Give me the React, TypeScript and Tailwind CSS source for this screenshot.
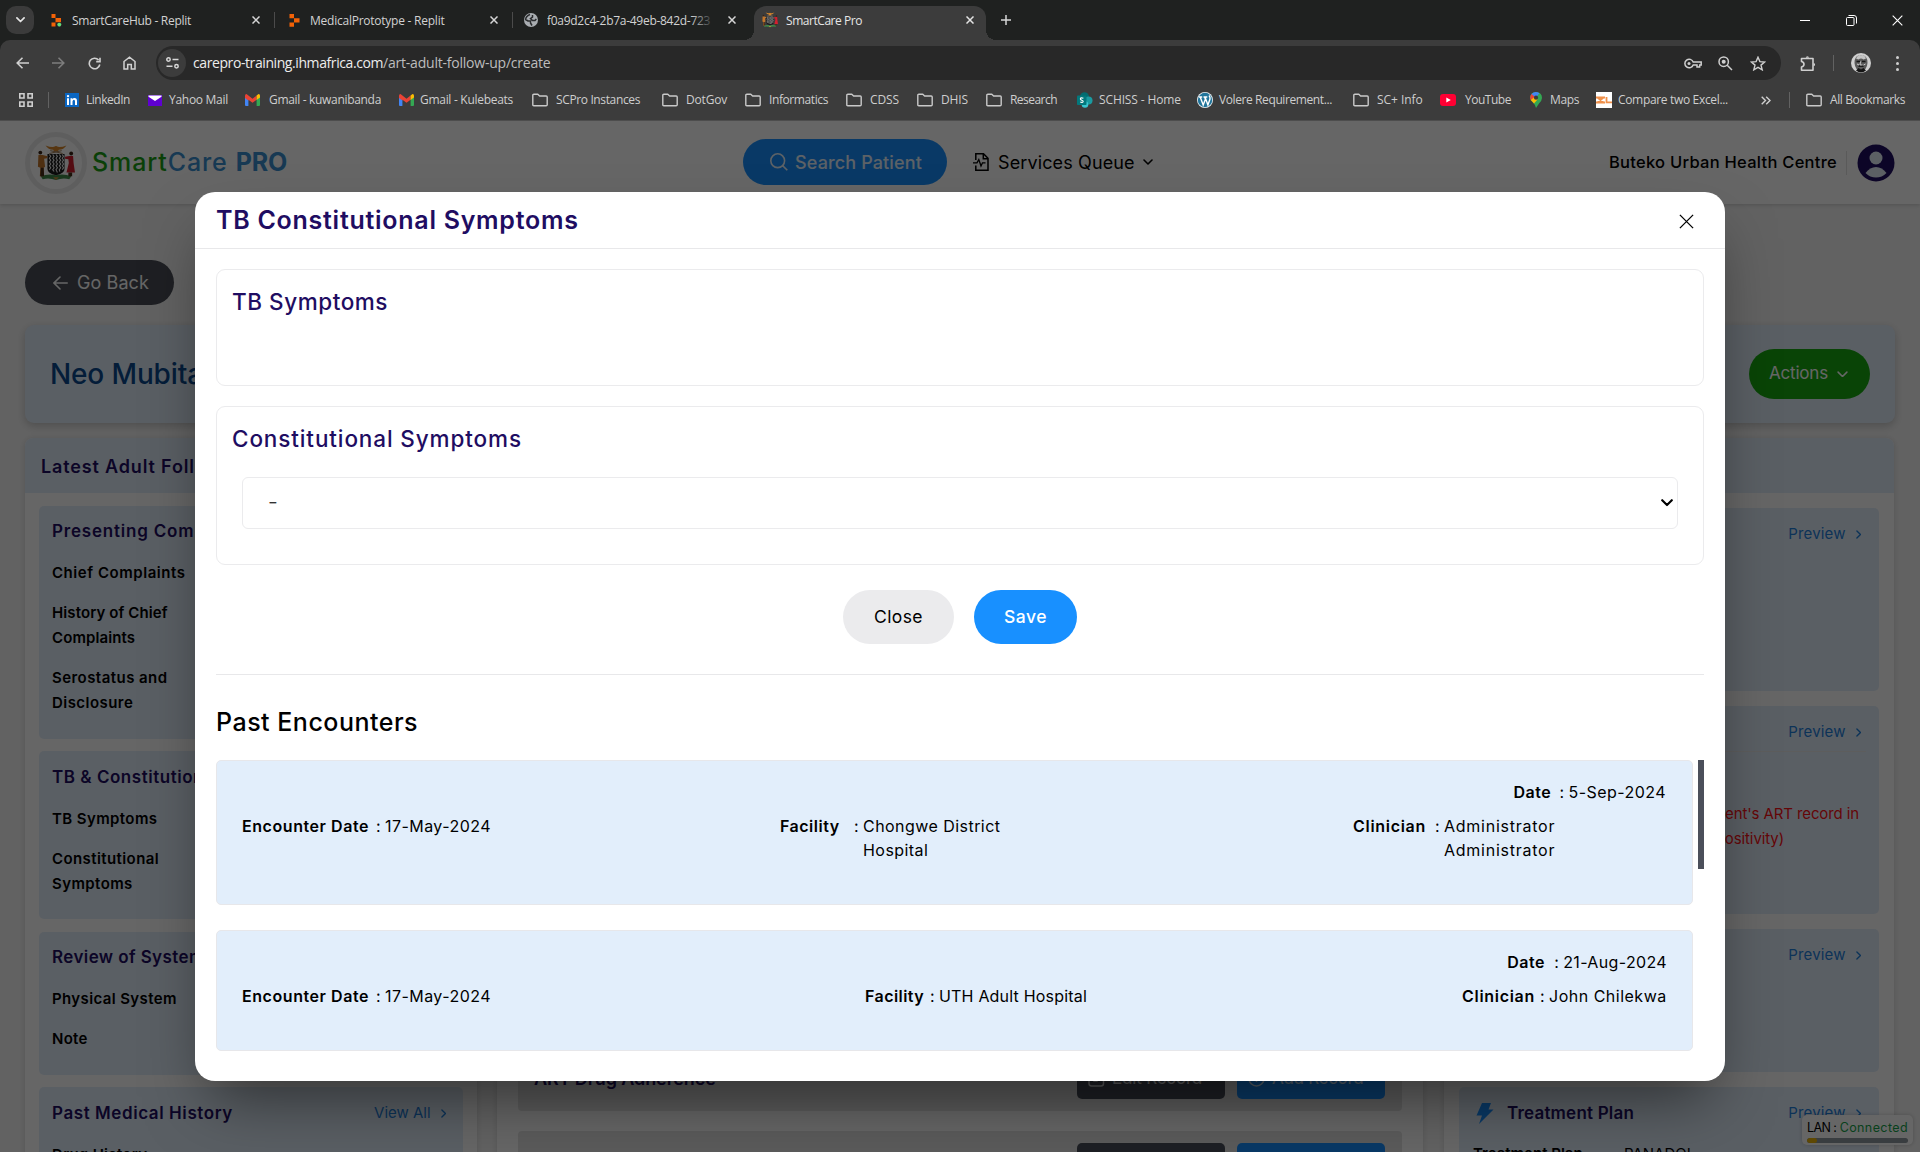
import type { ReactNode } from "react";

/* ---------- small drawings ---------- */

function Close({ s = 8, c = "#d6d6d6", w = 1.5 }: { s?: number; c?: string; w?: number }) {
  return (
    <svg width={s} height={s} viewBox="0 0 10 10" fill="none" stroke={c} strokeWidth={w * (10 / s)} className="shrink-0">
      <path d="M.6.6l8.800 8.800M9.400.6.6 9.400" />
    </svg>
  );
}

function Chevron({ w = 10, c = "currentColor", sw = 1.5, dir = "down" }: { w?: number; c?: string; sw?: number; dir?: "down" | "right" }) {
  return dir === "down" ? (
    <svg width={w} height={w * 0.6} viewBox="0 0 10 6" fill="none" stroke={c} strokeWidth={sw} strokeLinecap="round" strokeLinejoin="round" className="shrink-0">
      <path d="M1 1l4 4 4-4" />
    </svg>
  ) : (
    <svg width={w * 0.6} height={w} viewBox="0 0 6 10" fill="none" stroke={c} strokeWidth={sw} strokeLinecap="round" strokeLinejoin="round" className="shrink-0">
      <path d="M1 1l4 4-4 4" />
    </svg>
  );
}

function Folder() {
  return (
    <svg width="16" height="14" viewBox="0 0 16 14" fill="none" stroke="#c9c9c9" strokeWidth="1.4" strokeLinejoin="round" className="shrink-0">
      <path d="M.8 2.2Q.8 1.2 1.8 1.2H5.8L7.6 3H14.2Q15.2 3 15.2 4V11.8Q15.2 12.8 14.2 12.8H1.8Q.8 12.8.8 11.8Z" />
    </svg>
  );
}

function CoatOfArms({ size = 16 }: { size?: number }) {
  return (
    <svg width={size} height={size} viewBox="0 0 40 40" className="shrink-0">
      <path d="M4 34Q12 31 20 33Q28 31 36 34L34 37Q27 35 20 38Q13 35 6 37Z" fill="#3f8a4a" />
      <path d="M17 35h6l-3 3z" fill="#c98a3a" />
      <path d="M9 1.500Q14 3.500 18 3Q20 1 22 3Q26 3.500 31 1.500Q28 6 23 6L22 8H18L17 6Q12 6 9 1.500Z" fill="#d9882b" />
      <path d="M13 10l13-3M27 10L14 7" stroke="#a07a50" strokeWidth="1" />
      <path d="M11 10.500H29V26Q29 31 20 33Q11 31 11 26Z" fill="#1c1c1c" />
      <path
        d="M13 11l1.500 2-1.500 2 1.500 2-1.500 2 1.500 2-1.500 2 1.500 2-1.500 2M16.500 11l1.500 2-1.500 2 1.500 2-1.500 2 1.500 2-1.500 2 1.500 2-1.500 2 1.500 2M20 11l1.500 2-1.500 2 1.500 2-1.500 2 1.500 2-1.500 2 1.500 2-1.500 2 1.500 3M23.500 11l1.500 2-1.500 2 1.500 2-1.500 2 1.500 2-1.500 2 1.500 2-1.500 2 .5 2M26.500 11l1.500 2-1.500 2 1.500 2-1.500 2 1.500 2-1.500 2 1.500 2-1.500 2"
        stroke="#f4f4f4"
        strokeWidth="1.100"
        fill="none"
      />
      <circle cx="3.500" cy="9" r="2" fill="#3a2415" />
      <path d="M1.500 11.500H6L11 13 10.500 15 7.500 15.500 8.500 24 7 25 7.500 34H3L3.500 25 1 24Z" fill="#c2762c" />
      <path d="M4 25h3l.5 9H3.500Z" fill="#4a2d1a" />
      <circle cx="36" cy="10" r="2" fill="#3a2415" />
      <path d="M34 12.500H38L38.500 20 40 30H31L33.500 20 33 16 29.500 15.500V13.500Z" fill="#d3202f" />
      <path d="M33 30h4v4h-4z" fill="#4a2d1a" />
    </svg>
  );
}

function Gmail() {
  return (
    <svg width="15" height="12" viewBox="0 0 15 12" className="shrink-0">
      <path d="M0 2v9a1 1 0 0 0 1 1h2.400V4.500Z" fill="#4285f4" />
      <path d="M15 2v9a1 1 0 0 1-1 1h-2.400V4.500Z" fill="#34a853" />
      <path d="M0 1.800Q0 0 1.500 0L7.500 4.800 11.600 1.600V5.700L7.500 8.800 3.400 5.700V6.500L0 4Z" fill="#ea4335" />
      <path d="M11.600 1.600L13.500.1Q15 0 15 1.800V3.500L11.600 6Z" fill="#fbbc04" />
    </svg>
  );
}

/* ---------- browser frame ---------- */

function Tab({ icon, title, wide, tight, sep }: { icon: ReactNode; title: string; wide: string; tight: string; sep: boolean }) {
  return (
    <div className={`flex h-10 items-center ${wide}`}>
      <div className="flex w-[14px] justify-center">{icon}</div>
      <div className={`ml-[9px] flex-1 overflow-hidden whitespace-nowrap pt-px text-[12px] text-[#d2d2d2] ${tight}`}>{title}</div>
      <Close s={8} />
      <div className={`ml-[14px] h-4 w-px ${sep ? "bg-[#4b4b4b]" : ""}`} />
    </div>
  );
}

function TabStrip() {
  return (
    <div className="flex h-10 items-center bg-[#1f2120] pl-[6px]">
      <div className="mr-[15px] flex h-7 w-7 items-center justify-center rounded-[10px] bg-[#3b3b3b]">
        <Chevron w={9} c="#e6e6e6" sw={1.9} />
      </div>
      <Tab
        wide="w-[226px]"
        tight="tracking-[-0.28px]"
        sep
        title="SmartCareHub - Replit"
        icon={
          <svg width="11" height="13" viewBox="0 0 11 13">
            <path d="M.5 0H4.500V4H.5zM4.500 4H10V8.200H4.500zM.5 8.500H4.500V12.500H.5z" fill="#f26207" />
            <circle cx="8.300" cy="10.600" r="2.300" fill="#3c3c3c" />
            <circle cx="8.300" cy="10.600" r="1.900" fill="#5fe07a" />
          </svg>
        }
      />
      <div className="w-[12px]" />
      <Tab
        wide="w-[226px]"
        tight="tracking-[-0.24px]"
        sep
        title="MedicalPrototype - Replit"
        icon={
          <svg width="11" height="13" viewBox="0 0 11 13">
            <path d="M.5 0H5V4.200H.5zM5 4.200H10.500V8.500H5zM.5 8.500H5V12.700H.5z" fill="#f26207" />
          </svg>
        }
      />
      <div className="w-[11px]" />
      <div className="relative">
        <Tab
          wide="w-[227px]"
          tight="tracking-[-0.28px]"
          sep={false}
          title="f0a9d2c4-2b7a-49eb-842d-723"
          icon={
            <svg width="14" height="14" viewBox="0 0 14 14">
              <circle cx="7" cy="7" r="7" fill="#a9adb1" />
              <path d="M6 1.500Q2 3 1.600 6.500L4 8h2.500v2L8 12.500M8.500 2v2L6.500 5.500 8.500 7.500H11L12.300 6" fill="none" stroke="#2a2c2e" strokeWidth="1.500" />
            </svg>
          }
        />
        <div className="absolute right-[36px] top-2 h-6 w-6 bg-linear-to-r from-transparent to-[#1f2120]" />
      </div>
      <div className="relative ml-[3px] mt-[6px] flex h-[34px] w-[232px] items-center rounded-t-[12px] bg-[#3c3c3c] pl-2">
        <div className="absolute -left-[10px] bottom-0 h-[10px] w-[10px] bg-[radial-gradient(circle_at_0_0,transparent_10px,#3c3c3c_10px)]" />
        <div className="absolute -right-[10px] bottom-0 h-[10px] w-[10px] bg-[radial-gradient(circle_at_100%_0,transparent_10px,#3c3c3c_10px)]" />
        <div className="-mt-[6px] flex flex-1 items-center">
          <CoatOfArms size={16} />
          <div className="ml-2 flex-1 pt-px text-[12px] tracking-[-0.45px] text-[#e6e6e6]">SmartCare Pro</div>
          <div className="mr-[12px]">
            <Close s={8} c="#e4e4e4" />
          </div>
        </div>
      </div>
      <svg width="10" height="10" viewBox="0 0 10 10" stroke="#d6d6d6" strokeWidth="1.500" className="ml-[15px]">
        <path d="M5 0v10M0 5h10" />
      </svg>
      <div className="ml-auto flex items-center pr-[17px]">
        <div className="h-px w-[10px] bg-white" />
        <svg width="11" height="11" viewBox="0 0 11 11" fill="none" stroke="#fff" className="ml-[36px]">
          <rect x=".5" y="2.500" width="7.500" height="8" rx="1" />
          <path d="M2.500.5H8Q10.500.5 10.500 3V8.500" />
        </svg>
        <div className="ml-[35px]">
          <Close s={11} c="#fff" w={1.1} />
        </div>
      </div>
    </div>
  );
}

function Toolbar() {
  return (
    <div className="flex h-[46px] items-center pl-4">
      <svg width="13" height="12" viewBox="0 0 13 12" fill="none" stroke="#d0d0d0" strokeWidth="1.600">
        <path d="M13 6H1.200M6.500.7L1.200 6l5.300 5.300" />
      </svg>
      <svg width="13" height="12" viewBox="0 0 13 12" fill="none" stroke="#7d7d7d" strokeWidth="1.600" className="ml-[23px]">
        <path d="M0 6h11.800M6.500.7L11.800 6l-5.300 5.300" />
      </svg>
      <svg width="13" height="13" viewBox="0 0 13 13" fill="none" stroke="#d0d0d0" strokeWidth="1.600" className="ml-[23px]">
        <path d="M11.800 7.500A5.300 5.300 0 1 1 10.600 3M12 .8V4.600H8.200" />
      </svg>
      <svg width="13" height="14" viewBox="0 0 13 14" fill="none" stroke="#d0d0d0" strokeWidth="1.500" className="ml-[22px]">
        <path d="M1 5.500L6.500 1.200 12 5.500V13H8.300V8.500H4.700V13H1Z" />
      </svg>
      <div className="ml-[20px] flex h-[34px] w-[1625px] items-center rounded-full bg-[#282828] pl-[2px]">
        <div className="flex h-7 w-7 items-center justify-center rounded-full bg-[#3c3c3c]">
          <svg width="13" height="12" viewBox="0 0 13 12" fill="none" stroke="#d8d8d8" strokeWidth="1.500">
            <circle cx="2.500" cy="2.500" r="1.700" />
            <path d="M6.500 2.500H12.500M.5 9.300H6.500" />
            <circle cx="10.500" cy="9.300" r="1.700" />
          </svg>
        </div>
        <div className="ml-[7px] flex pb-px text-[14px]">
          <span className="tracking-[-0.41px] text-[#ededed]">carepro-training.ihmafrica.com</span>
          <span className="tracking-[-0.22px] text-[#bdbdbd]">/art-adult-follow-up/create</span>
        </div>
        <div className="ml-auto flex items-center pr-[15px]">
          <svg width="18" height="11" viewBox="0 0 18 11" fill="none" stroke="#cfcfcf" strokeWidth="1.500">
            <path d="M9.200 4H17.200V7H15.700V9H13V7H9.200A4.300 4.300 0 1 1 9.200 4Z" />
            <circle cx="5" cy="5.500" r="1.500" fill="#cfcfcf" stroke="none" />
          </svg>
          <svg width="15" height="15" viewBox="0 0 15 15" fill="none" stroke="#cfcfcf" strokeWidth="1.500" className="ml-[16px]">
            <circle cx="5.700" cy="5.700" r="4.700" />
            <path d="M9.200 9.200L14 14" />
            <circle cx="5.700" cy="5.700" r="2" fill="#cfcfcf" stroke="none" />
          </svg>
          <svg width="16" height="15" viewBox="0 0 16 15" fill="none" stroke="#cfcfcf" strokeWidth="1.400" className="ml-[17px]">
            <path d="M8 1.200L9.900 5.600 14.700 6 11 9.100 12.200 13.800 8 11.300 3.800 13.800 5 9.100 1.300 6 6.100 5.600Z" />
          </svg>
        </div>
      </div>
      <svg width="17" height="17" viewBox="0 0 17 17" fill="none" stroke="#cfcfcf" strokeWidth="1.600" className="ml-[19px]" strokeLinejoin="round">
        <path d="M1.500 3.500H13V15.200H1.500V12Q4 11.500 4 9.300T1.500 6.500Z" />
        <path d="M5.800 2.800a1.600 1.600 0 0 1 3.200 0zM13.600 8a1.500 1.500 0 0 1 0 3z" fill="#cfcfcf" stroke="none" />
      </svg>
      <div className="ml-4 h-4 w-px bg-[#626262]" />
      <svg width="20" height="20" viewBox="0 0 20 20" className="ml-[17px]">
        <circle cx="10" cy="10" r="10" fill="#d0d0d0" />
        <path d="M3.500 10Q3.500 2 10 2T16.500 10Q16 17.500 10 17.500T3.500 10Z" fill="#5a5a5a" />
        <path d="M5 5.500Q7 1 10 2.200 13.500 1 15 5.500L12.500 6.500Q10 4.500 7.500 6.500Z" fill="#c4c4c4" />
        <path d="M5.500 8.500h3.500M11 8.500h3.500M7.500 13.500q2.500-1.500 5 0" stroke="#161616" strokeWidth="1.400" />
        <path d="M9.500 8.500L9 12h2.500M6 11l2 1M12.500 12l2-1" stroke="#c9c9c9" fill="none" />
        <path d="M5 17.500L7.500 15 10 16.500 12.500 15 15 17.500Q10 21.500 5 17.500Z" fill="#141414" />
      </svg>
      <div className="ml-[25px] flex flex-col gap-[3px]">
        <div className="h-[3px] w-[3px] rounded-full bg-[#cfcfcf]" />
        <div className="h-[3px] w-[3px] rounded-full bg-[#cfcfcf]" />
        <div className="h-[3px] w-[3px] rounded-full bg-[#cfcfcf]" />
      </div>
    </div>
  );
}

const bookmarks: { w: string; gap: string; tight: string; label: string; icon: ReactNode }[] = [
  {
    w: "w-[83px]", gap: "ml-[7px]", tight: "tracking-[-0.47px]", label: "LinkedIn",
    icon: (
      <svg width="14" height="14" viewBox="0 0 14 14" className="shrink-0">
        <rect width="14" height="14" fill="#0a66c2" />
        <path d="M2 5.200h2v6.800H2zM5.500 5.200h1.900v1Q8 5 9.500 5 12 5 12 8v4h-2V8.400Q10 6.800 8.900 6.800T7.500 8.400V12h-2z" fill="#fff" />
        <circle cx="3" cy="3.100" r="1.200" fill="#fff" />
      </svg>
    ),
  },
  {
    w: "w-[97px]", gap: "ml-[7px]", tight: "tracking-[-0.28px]", label: "Yahoo Mail",
    icon: (
      <svg width="14" height="11" viewBox="0 0 14 11" className="shrink-0">
        <rect width="14" height="11" fill="#5f01d1" />
        <path d="M.5.5h13v1.300L7 6 .5 1.800z" fill="#fff" />
      </svg>
    ),
  },
  { w: "w-[154px]", gap: "ml-[9px]", tight: "tracking-[-0.32px]", label: "Gmail - kuwanibanda", icon: <Gmail /> },
  { w: "w-[133px]", gap: "ml-[6px]", tight: "tracking-[-0.29px]", label: "Gmail - Kulebeats", icon: <Gmail /> },
  { w: "w-[130px]", gap: "ml-2", tight: "tracking-[-0.37px]", label: "SCPro Instances", icon: <Folder /> },
  { w: "w-[83px]", gap: "ml-2", tight: "tracking-[-0.19px]", label: "DotGov", icon: <Folder /> },
  { w: "w-[101px]", gap: "ml-2", tight: "tracking-[-0.4px]", label: "Informatics", icon: <Folder /> },
  { w: "w-[71px]", gap: "ml-2", tight: "tracking-[-0.11px]", label: "CDSS", icon: <Folder /> },
  { w: "w-[69px]", gap: "ml-2", tight: "tracking-[-0.13px]", label: "DHIS", icon: <Folder /> },
  { w: "w-[91px]", gap: "ml-2", tight: "tracking-[-0.54px]", label: "Research", icon: <Folder /> },
  {
    w: "w-[120px]", gap: "ml-[6px]", tight: "tracking-[-0.12px]", label: "SCHISS - Home",
    icon: (
      <svg width="16" height="16" viewBox="0 0 16 16" className="shrink-0">
        <circle cx="7.500" cy="4.700" r="4.500" fill="#036c70" />
        <circle cx="11.500" cy="8.500" r="4" fill="#1a9ba1" />
        <circle cx="8" cy="12.500" r="3.300" fill="#37c6d0" />
        <rect y="3.500" width="9.500" height="9.500" rx=".8" fill="#03787c" />
        <path d="M6.400 6.200Q3.400 5.200 3.400 6.900 3.400 7.700 4.800 8.200 6.400 8.700 6.100 9.700 5.500 10.700 3.200 10" fill="none" stroke="#fff" strokeWidth="1.200" />
      </svg>
    ),
  },
  {
    w: "w-[156px]", gap: "ml-[6px]", tight: "tracking-[-0.4px]", label: "Volere Requirement...",
    icon: (
      <svg width="16" height="16" viewBox="0 0 16 16" className="shrink-0">
        <circle cx="8" cy="8" r="8" fill="#e8eef2" />
        <circle cx="8" cy="8" r="7.200" fill="#21759b" />
        <path d="M2 5h3.200M6.500 5h3.800M3.200 5L6.200 13 8.400 7.200 7.600 5M8 5l2.900 8L13 7Q13.300 5 12 3.500" fill="none" stroke="#fff" strokeWidth="1.400" />
      </svg>
    ),
  },
  { w: "w-[87px]", gap: "ml-2", tight: "tracking-[-0.05px]", label: "SC+ Info", icon: <Folder /> },
  {
    w: "w-[90px]", gap: "ml-[9px]", tight: "tracking-[-0.48px]", label: "YouTube",
    icon: (
      <svg width="16" height="12" viewBox="0 0 16 12" className="shrink-0">
        <rect width="16" height="12" rx="3" fill="#ff0033" />
        <path d="M6.300 3.500L10.800 6 6.300 8.500Z" fill="#fff" />
      </svg>
    ),
  },
  {
    w: "w-[66px]", gap: "ml-[8px]", tight: "tracking-[-0.38px]", label: "Maps",
    icon: (
      <svg width="12" height="16" viewBox="0 0 12 16" className="shrink-0">
        <path d="M6 0Q12 .3 12 6 12 8.500 9 11.500L6 16Q5.500 13 3 10.500 0 8 0 5.500 .5.300 6 0Z" fill="#34a853" />
        <path d="M1.500 2Q5-1.500 9.500 1.200L3.500 8Z" fill="#4285f4" />
        <path d="M1.500 2L5 5 1 8.500Q-.8 5 1.500 2Z" fill="#ea4335" />
        <path d="M.8 8L5 4.500 7.500 7.500 4 11.500Z" fill="#fbbc04" />
        <circle cx="6" cy="5.700" r="2.100" fill="#3c3c3c" />
      </svg>
    ),
  },
  {
    w: "w-[132px]", gap: "ml-[6px]", tight: "tracking-[-0.33px]", label: "Compare two Excel...",
    icon: (
      <svg width="16" height="16" viewBox="0 0 16 16" className="shrink-0">
        <rect width="16" height="16" fill="#fff" />
        <path d="M1.500 5.500l6 5M7.500 5.500l-6 5M10.500 5V10.300H16M0 10.500h9M0 5.500h9" fill="none" stroke="#f0904a" strokeWidth="1.800" />
      </svg>
    ),
  },
];

function BookmarkBar() {
  return (
    <div className="flex h-[35px] items-center pb-[7px] pl-[19px] text-[12px] text-[#cecece]">
      <svg width="14" height="14" viewBox="0 0 14 14" fill="none" stroke="#cfcfcf" strokeWidth="1.600">
        <path d="M.8.8H5V5H.8zM9 .8h4.200V5H9zM.8 9H5v4.200H.8zM9 9h4.200v4.200H9z" />
      </svg>
      <div className="ml-[15px] mr-[16px] h-4 w-px bg-[#626262]" />
      {bookmarks.map((b) => (
        <div key={b.label} className={`flex shrink-0 items-center whitespace-nowrap ${b.w}`}>
          {b.icon}
          <span className={`-mt-px ${b.gap} ${b.tight}`}>{b.label}</span>
        </div>
      ))}
      <svg width="10" height="9" viewBox="0 0 10 9" fill="none" stroke="#cfcfcf" strokeWidth="1.400" className="ml-[33px] shrink-0">
        <path d="M.7.7L4.500 4.500.7 8.300M5.200.7L9 4.500 5.200 8.300" />
      </svg>
      <div className="ml-[18px] mr-[16px] h-4 w-px shrink-0 bg-[#626262]" />
      <Folder />
      <span className="-mt-px ml-2 whitespace-nowrap tracking-[-0.38px]">All Bookmarks</span>
    </div>
  );
}

/* ---------- application page ---------- */

function SiteHeader() {
  return (
    <header className="relative flex h-[83px] items-center bg-white shadow-[0_1px_4px_rgba(0,0,0,0.18)]">
      <div className="ml-[25px] flex h-[62px] w-[62px] items-center justify-center rounded-full border-[5px] border-[#ececec] bg-white">
        <CoatOfArms size={38} />
      </div>
      <div className="ml-[5px] flex w-[201px] items-center whitespace-nowrap text-[25px] leading-none">
        <span className="font-medium tracking-[0.9px] text-[#1ba016]">Smart</span>
        <span className="font-medium tracking-[0.9px] text-[#3b8fd0]">Care</span>
        <span className="ml-[8px] font-bold tracking-[-0.2px] text-[#3b8fd0]">PRO</span>
      </div>
      <div className="-mt-px ml-[450px] flex h-[46px] w-[204px] items-center rounded-full bg-[#1890ff] pl-[27px] text-white/90">
        <svg width="18" height="18" viewBox="0 0 18 18" fill="none" stroke="currentColor" strokeWidth="1.600">
          <circle cx="7.700" cy="7.700" r="6.900" />
          <path d="M12.600 12.600L17.300 17.300" />
        </svg>
        <span className="ml-[7px] text-[18px] font-medium tracking-[0.13px]">Search Patient</span>
      </div>
      <svg width="16" height="18" viewBox="0 0 16 18" fill="none" stroke="#000" strokeWidth="1.500" className="-mt-px ml-[26px]">
        <path d="M2.800 7V.8H10.500L15 5.300V17.200H2.800V12.500M10.300 1v4.700H15" />
        <path d="M0 9.800H4L5.800 6.500 8 13 9.500 9.800H12.500" strokeWidth="1.300" />
      </svg>
      <span className="-mt-px ml-[9px] text-[18px] tracking-[0.12px] text-black">Services Queue</span>
      <span className="-mt-px ml-[8px]">
        <Chevron w={10} c="#000" sw={1.6} />
      </span>
      <span className="-mt-px ml-auto whitespace-nowrap text-[16.5px] font-medium tracking-[0.27px] text-black">Buteko Urban Health Centre</span>
      <div className="ml-[9px] h-6 w-px bg-[#e2e2e2]" />
      <svg width="38" height="38" viewBox="0 0 38 38" className="ml-[10px] mr-[25px]">
        <circle cx="19" cy="19" r="18.500" fill="#1f0d62" />
        <circle cx="19" cy="14" r="6.500" fill="#e6f0fa" />
        <path d="M8.500 29Q13 23 19 23T29.500 29Q25 33.500 19 33.500T8.500 29Z" fill="#e6f0fa" />
      </svg>
    </header>
  );
}

const sections: { h: string; title: string; ls: string; link?: string; items: { t: string[]; ls: string }[] }[] = [
  {
    h: "h-[233px] mt-[13px] pt-3", title: "Presenting Complaints", ls: "tracking-[0.8px]",
    items: [
      { t: ["Chief Complaints"], ls: "tracking-[0.55px]" },
      { t: ["History of Chief", "Complaints"], ls: "tracking-[0.1px]" },
      { t: ["Serostatus and", "Disclosure"], ls: "tracking-[0.45px]" },
    ],
  },
  {
    h: "h-[168px] mt-3 pt-[13px]", title: "TB & Constitutional Symptoms", ls: "tracking-[0.53px]",
    items: [
      { t: ["TB Symptoms"], ls: "tracking-[0.4px]" },
      { t: ["Constitutional", "Symptoms"], ls: "tracking-[0.41px]" },
    ],
  },
  {
    h: "h-[143px] mt-[13px] pt-3", title: "Review of Systems", ls: "tracking-[0.4px]",
    items: [
      { t: ["Physical System"], ls: "tracking-[0.38px]" },
      { t: ["Note"], ls: "tracking-[0.3px]" },
    ],
  },
  {
    h: "h-[143px] mt-3 pt-[13px]", title: "Past Medical History", ls: "tracking-[0.58px]", link: "View All",
    items: [{ t: ["Drug History"], ls: "tracking-[0.3px]" }],
  },
];

function LeftColumn() {
  return (
    <div className="w-[452px] overflow-hidden rounded-t-[8px] bg-white shadow-[0_1px_6px_rgba(0,0,0,0.14)]">
      <div className="flex h-[55px] items-center bg-[#e2eefb] pl-[16px] pt-px text-[18px] font-semibold tracking-[0.85px] text-[#1f0d62]">Latest Adult Follow Up</div>
      {sections.map((s) => (
        <div key={s.title} className={`mx-[14px] rounded-[5px] bg-[#e2eefb] px-[13px] ${s.h}`}>
          <div className="flex h-[26px] items-center justify-between">
            <span className={`whitespace-nowrap pt-[2px] text-[17px] font-semibold text-[#1f0d62] ${s.ls}`}>{s.title}</span>
            {s.link && (
              <span className="flex items-center gap-[10px] pr-[4px] text-[15px] text-[#1f7fdc]">
                {s.link}
                <Chevron w={9} dir="right" />
              </span>
            )}
          </div>
          <div className="mt-4 flex flex-col gap-[15px] text-[15px] font-semibold leading-[25px] text-black">
            {s.items.map((it) => (
              <div key={it.t[0]} className={it.ls}>
                {it.t.map((line) => (
                  <div key={line}>{line}</div>
                ))}
              </div>
            ))}
          </div>
        </div>
      ))}
    </div>
  );
}

function RecordRow({ title, className, children }: { title: string; className: string; children?: ReactNode }) {
  return (
    <div className={`mx-[21px] flex h-[68px] items-center rounded-[4px] bg-[#e4e4e4] pl-4 pr-[17px] ${className}`}>
      <span className="flex-1 pt-[3px] text-[18px] font-semibold tracking-[-0.1px] text-[#1f0d62]">{title}</span>
      {children ?? (
        <>
          <div className="h-11 w-[148px] rounded-[5px] bg-[#4a4f5a]" />
          <div className="ml-3 h-11 w-[148px] rounded-[5px] bg-[#1890ff]" />
        </>
      )}
    </div>
  );
}

function RecordActions() {
  return (
    <>
      <div className="flex h-11 w-[148px] items-center rounded-[5px] bg-[#4a4f5a] pl-[11px] pt-[3px] text-white/80">
        <svg width="17" height="17" viewBox="0 0 17 17" fill="none" stroke="currentColor" strokeWidth="1.500">
          <path d="M9 1.500H3.500Q1 1.500 1 4V13.500Q1 16 3.500 16H13Q15.500 16 15.500 13.500V8M6 11V8L12.500 1.500 15.500 4.500 9 11Z" />
        </svg>
        <span className="ml-[7px] whitespace-nowrap text-[17px] tracking-[-0.19px]">Edit Record</span>
      </div>
      <div className="ml-3 flex h-11 w-[148px] items-center rounded-[5px] bg-[#1890ff] pl-[11px] pt-[3px] text-white/80">
        <svg width="17" height="17" viewBox="0 0 17 17" fill="none" stroke="currentColor" strokeWidth="1.500">
          <circle cx="8.500" cy="8.500" r="7.500" />
          <path d="M8.500 5v7M5 8.500h7" />
        </svg>
        <span className="ml-[7px] whitespace-nowrap text-[17px] tracking-[-0.3px]">Add Record</span>
      </div>
    </>
  );
}

function PreviewCard({ className, heading, rule, children }: { className: string; heading?: ReactNode; rule?: boolean; children?: ReactNode }) {
  return (
    <div className={`mx-[15px] rounded-[5px] bg-[#e2eefb] pt-[13px] ${className}`}>
      <div className={`mx-[13px] flex h-[33px] items-start justify-between border-b ${rule ? "border-[#e9e9e9]" : "border-transparent"}`}>
        <span className="flex h-[26px] items-center">{heading}</span>
        <span className="flex h-[26px] items-center gap-[10px] pr-[5px] text-[15px] tracking-[0.15px] text-[#1f7fdc]">
          Preview
          <Chevron w={9} dir="right" />
        </span>
      </div>
      {children}
    </div>
  );
}

function RightColumn() {
  return (
    <div className="ml-[21px] w-[450px] overflow-hidden rounded-t-[8px] bg-white shadow-[0_1px_6px_rgba(0,0,0,0.14)]">
      <div className="h-[55px] bg-[#e2eefb]" />
      <PreviewCard className="mt-[15px] h-[183px]" />
      <PreviewCard className="mt-[15px] h-[208px]" rule>
        <div className="mt-[49px] pr-[20px] text-right text-[15px] leading-[25px] tracking-[-0.11px] text-[#fb0f14]">
          <div>patient's ART record in</div>
          <div className="pr-[75px]">(seropositivity)</div>
        </div>
      </PreviewCard>
      <PreviewCard className="mt-[15px] h-[143px]" />
      <PreviewCard
        className="mt-[15px] h-[143px]"
        heading={
          <>
            <svg width="18" height="21" viewBox="0 0 18 21" className="ml-[4px]">
              <path d="M6 0H15L12.500 6.500H17.500L3 21 6 12.500H.5Z" fill="#1890ff" />
            </svg>
            <span className="ml-[13px] pt-[2px] text-[17px] font-semibold tracking-[0.2px] text-[#1f0d62]">Treatment Plan</span>
          </>
        }
      >
        <div className="ml-[14px] mt-[9px] flex text-[15px] leading-6 text-black">
          <span className="w-[151px] font-semibold">Treatment Plan</span>
          <span>PANADOL</span>
        </div>
      </PreviewCard>
    </div>
  );
}

function LanBadge() {
  return (
    <div className="absolute bottom-[7px] right-[7px] flex h-[30px] w-[111px] flex-col rounded-[5px] bg-white px-[5px] pt-[5px] shadow-[0_0_4px_rgba(0,0,0,0.2)]">
      <div className="flex h-4 items-center justify-between whitespace-nowrap text-[12.5px]">
        <span className="tracking-[-0.6px] text-black">LAN :</span>
        <span className="tracking-[0.4px] text-[#16a34a]">Connected</span>
      </div>
      <div className="mt-[2px] h-[5px] overflow-hidden rounded-full bg-[#9098a0]">
        <div className="h-full w-[10px] rounded-full bg-[#eab308]" />
      </div>
    </div>
  );
}

/* ---------- dialog ---------- */

function Field({ label, value, labelClass, valueClass = "tracking-[0.45px]", lw }: { label: string; value: string[]; labelClass: string; valueClass?: string; lw: string }) {
  return (
    <div className="flex whitespace-nowrap">
      <span className={`font-semibold ${labelClass} ${lw}`}>{label}</span>
      <span className="w-[9px]">:</span>
      <span className={valueClass}>
        {value.map((v, i) => (
          <span key={i} className="block">
            {v}
          </span>
        ))}
      </span>
    </div>
  );
}

function PastEncounters() {
  return (
    <div className="flex h-[291px] items-start justify-between overflow-hidden">
      <div className="w-[1477px] text-[16px] leading-6 text-black">
        <div className="h-[145px] rounded-[5px] border border-[#e7e7ea] bg-[#e2eefb] pl-[25px] pr-[26px] pt-[19px]">
          <div className="flex justify-end">
            <Field label="Date" value={["5-Sep-2024"]} labelClass="tracking-[0.5px]" valueClass="tracking-[0.45px]" lw="w-[46px]" />
          </div>
          <div className="mt-[10px] flex">
            <div className="w-[538px]">
              <Field label="Encounter Date" value={["17-May-2024"]} labelClass="tracking-[0.56px]" lw="w-[134px]" />
            </div>
            <div className="w-[573px]">
              <Field label="Facility" value={["Chongwe District", "Hospital"]} labelClass="tracking-[0.5px]" lw="w-[74px]" />
            </div>
            <Field label="Clinician" value={["Administrator", "Administrator"]} labelClass="tracking-[0.7px]" valueClass="tracking-[0.75px]" lw="w-[82px]" />
          </div>
        </div>
        <div className="mt-[25px] h-[121px] rounded-[5px] border border-[#e7e7ea] bg-[#e2eefb] pl-[25px] pr-[25px] pt-[19px]">
          <div className="flex justify-end">
            <Field label="Date" value={["21-Aug-2024"]} labelClass="tracking-[0.5px]" valueClass="tracking-[0.35px]" lw="w-[47px]" />
          </div>
          <div className="mt-[10px] flex">
            <div className="w-[623px]">
              <Field label="Encounter Date" value={["17-May-2024"]} labelClass="tracking-[0.56px]" lw="w-[134px]" />
            </div>
            <div className="w-[597px]">
              <Field label="Facility" value={["UTH Adult Hospital"]} labelClass="tracking-[0.43px]" valueClass="tracking-[0.19px]" lw="w-[65px]" />
            </div>
            <Field label="Clinician" value={["John Chilekwa"]} labelClass="tracking-[0.7px]" valueClass="tracking-[0.5px]" lw="w-[78px]" />
          </div>
        </div>
      </div>
      <div className="h-[109px] w-[6px] bg-[#4b4f5a]" />
    </div>
  );
}

function Dialog() {
  return (
    <div className="h-[889px] w-[1530px] rounded-[20px] bg-white shadow-[0_31px_62px_-15px_rgba(0,0,0,0.5)]">
      <div className="flex h-[57px] items-center justify-between border-b border-[#e8e8ea] pl-[21px] pr-[31px] pt-[2px]">
        <h2 className="text-[25px] font-semibold tracking-[0.73px] text-[#1f0d62]">TB Constitutional Symptoms</h2>
        <Close s={15} c="#000" w={1.3} />
      </div>
      <div className="px-[21px]">
        <section className="mt-5 h-[117px] rounded-[9px] border border-[#ebebed] px-[15px] pt-[15px]">
          <h3 className="text-[22.5px] font-medium leading-[34px] tracking-[0.55px] text-[#1f0d62]">TB Symptoms</h3>
        </section>
        <section className="mt-5 h-[159px] rounded-[9px] border border-[#ebebed] px-[15px] pt-[15px]">
          <h3 className="text-[22.5px] font-medium leading-[34px] tracking-[0.88px] text-[#1f0d62]">Constitutional Symptoms</h3>
          <div className="ml-[10px] mr-[10px] mt-[21px] flex h-[52px] items-center justify-between rounded-[6px] border border-[#ebebed] pl-[26px] pr-[4px]">
            <span className="scale-x-125 text-[17px] text-[#333]">-</span>
            <Chevron w={12} c="#000" sw={1.8} />
          </div>
        </section>
        <div className="mt-[25px] flex h-[54px] justify-center gap-5">
          <div className="flex w-[111px] items-center justify-center rounded-full bg-[#ebebed] text-[17.5px] tracking-[0.4px] text-black">Close</div>
          <div className="flex w-[103px] items-center justify-center rounded-full bg-[#1890ff] text-[17.5px] font-medium tracking-[0.5px] text-white">Save</div>
        </div>
        <div className="mt-[30px] h-px bg-[#e8e8ea]" />
        <h3 className="mb-5 mt-[29px] flex h-9 items-center pt-[2px] text-[25px] font-medium tracking-[0.5px] text-black">Past Encounters</h3>
        <PastEncounters />
      </div>
    </div>
  );
}

export default function App() {
  return (
    <div className="flex h-[1152px] w-[1920px] flex-col overflow-hidden bg-[#1f2120] font-['Open_Sans',sans-serif]">
      <TabStrip />
      <div className="h-[81px] shrink-0 rounded-t-[10px] border-b border-[#4d4d4d] bg-[#3c3c3c]">
        <Toolbar />
        <BookmarkBar />
      </div>
      <div className="relative h-[1031px] overflow-hidden bg-[#f5f5f5] font-['Inter',sans-serif]">
        <SiteHeader />
        <main className="px-[25px]">
          <div className="mt-14 flex h-[45px] w-[149px] items-center rounded-full bg-[#4b4f58] pl-[28px] text-[18px] tracking-[0.09px] text-white">
            <svg width="15" height="14" viewBox="0 0 15 14" fill="none" stroke="currentColor" strokeWidth="1.600" strokeLinecap="round">
              <path d="M14.200 7H1M7 1L1 7l6 6" />
            </svg>
            <span className="ml-[9px] whitespace-nowrap">Go Back</span>
          </div>
          <div className="mt-5 flex h-[98px] items-center justify-between rounded-[9px] bg-[#e2eefb] pl-[25px] pr-[25px] shadow-[0_3px_8px_rgba(0,0,0,0.2)]">
            <span className="text-[28px] font-medium tracking-[-0.13px] text-[#0a4a8f]">Neo Mubita</span>
            <div className="flex h-[50px] w-[121px] items-center rounded-full bg-[#18aa11] pl-5 text-[17px] tracking-[-0.19px] text-white">
              Actions
              <span className="ml-[9px]">
                <Chevron w={11} sw={1.4} />
              </span>
            </div>
          </div>
          <div className="mt-[15px] flex h-[760px]">
            <LeftColumn />
            <div className="ml-5 w-[926px] overflow-hidden rounded-t-[8px] bg-white shadow-[0_1px_6px_rgba(0,0,0,0.14)]">
              <div className="h-[55px] bg-[#e2eefb]" />
              <RecordRow title="ART Drug Adherence" className="mt-[550px]">
                <RecordActions />
              </RecordRow>
              <RecordRow title="" className="mt-5" />
            </div>
            <RightColumn />
          </div>
        </main>
        <LanBadge />
        <div className="absolute inset-0 flex items-start justify-center bg-black/60 pt-[71px]">
          <Dialog />
        </div>
      </div>
    </div>
  );
}
